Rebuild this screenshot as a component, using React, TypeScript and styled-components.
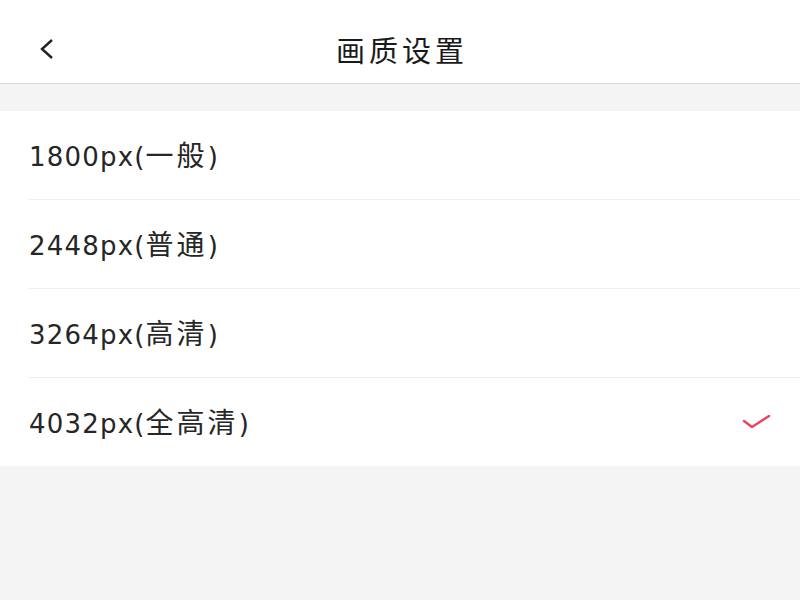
import styled, { createGlobalStyle } from "styled-components";

const GlobalStyle = createGlobalStyle`
  html, body {
    margin: 0;
    padding: 0;
    background: #f4f4f4;
  }
  body {
    font-family: "DejaVu Sans", "Noto Sans CJK SC", sans-serif;
    color: #222;
  }
`;

const Page = styled.div`
  width: 800px;
  height: 600px;
  background: #f4f4f4;
`;

const Header = styled.div`
  height: 83px;
  background: #fff;
  border-bottom: 1px solid #dcdcdc;
  display: flex;
  align-items: center;
  justify-content: center;
  position: relative;
`;

const Back = styled.button`
  position: absolute;
  left: 34px;
  top: 36px;
  border: 0;
  background: none;
  padding: 0;
  width: 24px;
  height: 26px;
  display: flex;
`;

const Title = styled.h1`
  margin: 14px 0 0 4px;
  font-size: 29px;
  font-weight: 400;
  letter-spacing: 4px;
  color: #1a1a1a;
  font-family: "Noto Sans CJK SC", sans-serif;
`;

const List = styled.div`
  margin-top: 27px;
  background: #fff;
`;

const Row = styled.div<{ $last?: boolean }>`
  height: 88px;
  margin-left: 28px;
  padding-right: 28px;
  display: flex;
  align-items: center;
  justify-content: space-between;
  border-bottom: ${(p) => (p.$last ? "none" : "1px solid #efefef")};
`;

const Label = styled.span`
  font-size: 26px;
  letter-spacing: 1.2px;
  color: #262626;
  margin-top: -3px;
  margin-left: 1px;
`;

const Name = styled.span`
  font-family: "Noto Sans CJK SC", sans-serif;
  font-size: 28px;
  letter-spacing: 3px;
`;

const options = [
  { size: "1800px", name: "一般" },
  { size: "2448px", name: "普通" },
  { size: "3264px", name: "高清" },
  { size: "4032px", name: "全高清" },
];

export default function App() {
  return (
    <Page>
      <GlobalStyle />
      <Header>
        <Back>
          <svg width="24" height="26" viewBox="0 0 24 26">
            <path d="M18 4 L8 13 L18 22" fill="none" stroke="#222" strokeWidth="2.4" />
          </svg>
        </Back>
        <Title>画质设置</Title>
      </Header>
      <List>
        {options.map((o, i) => (
          <Row key={o.size} $last={i === options.length - 1}>
            <Label>
              {o.size}(<Name>{o.name}</Name>)
            </Label>
            {i === options.length - 1 && (
              <svg width="30" height="18" viewBox="0 0 30 18">
                <path d="M2 8 L10 14 L27 3" fill="none" stroke="#e8475f" strokeWidth="2.6" strokeLinecap="round" strokeLinejoin="round" />
              </svg>
            )}
          </Row>
        ))}
      </List>
    </Page>
  );
}
